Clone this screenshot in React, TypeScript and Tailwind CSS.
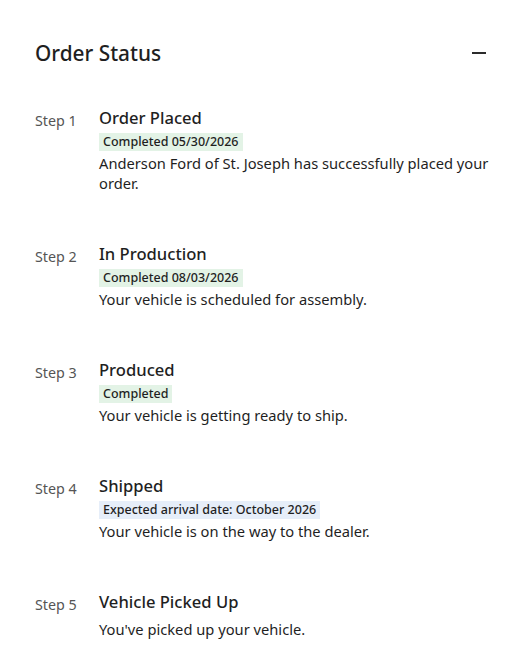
const steps = [
  {
    step: 'Step 1',
    title: 'Order Placed',
    badge: 'Completed 05/30/2026',
    tone: 'green',
    text: 'Anderson Ford of St. Joseph has successfully placed your order.',
  },
  {
    step: 'Step 2',
    title: 'In Production',
    badge: 'Completed 08/03/2026',
    tone: 'green',
    text: 'Your vehicle is scheduled for assembly.',
  },
  {
    step: 'Step 3',
    title: 'Produced',
    badge: 'Completed',
    tone: 'green',
    text: 'Your vehicle is getting ready to ship.',
  },
  {
    step: 'Step 4',
    title: 'Shipped',
    badge: 'Expected arrival date: October 2026',
    tone: 'blue',
    text: 'Your vehicle is on the way to the dealer.',
  },
  {
    step: 'Step 5',
    title: 'Vehicle Picked Up',
    badge: '',
    tone: '',
    text: "You've picked up your vehicle.",
  },
];

export default function App() {
  return (
    <div className="min-h-screen bg-white text-[#1f1f1f] font-['Noto_Sans','Open_Sans',sans-serif]">
      <div className="pl-[35px] pt-[37px]">
        <div className="flex items-center justify-between pr-[43px]">
          <h2 className="text-[20.8px] leading-[32px] font-medium">Order Status</h2>
          <button className="w-[14px] h-[2px] bg-[#2b2b2b]" aria-label="Collapse" />
        </div>
        <ol className="mt-[37px] flex flex-col gap-[49px] pr-[30px]">
          {steps.map((s) => (
            <li key={s.step} className="flex">
              <span className="w-[64px] shrink-0 text-[14.3px] leading-[24px] text-[#555] pt-[3px]">
                {s.step}
              </span>
              <div className="flex flex-col">
                <h3 className="text-[16.6px] leading-[24px] font-medium mb-[3px]">{s.title}</h3>
                {s.badge ? (
                  <span
                    className={`self-start px-[4px] text-[12.5px] leading-[18px] font-medium ${
                      s.tone === 'blue' ? 'bg-[#e6eef9]' : 'bg-[#e3f3e6]'
                    }`}
                  >
                    {s.badge}
                  </span>
                ) : null}
                <p className="text-[14.7px] leading-[20px] mt-[2px]">{s.text}</p>
              </div>
            </li>
          ))}
        </ol>
      </div>
    </div>
  );
}
